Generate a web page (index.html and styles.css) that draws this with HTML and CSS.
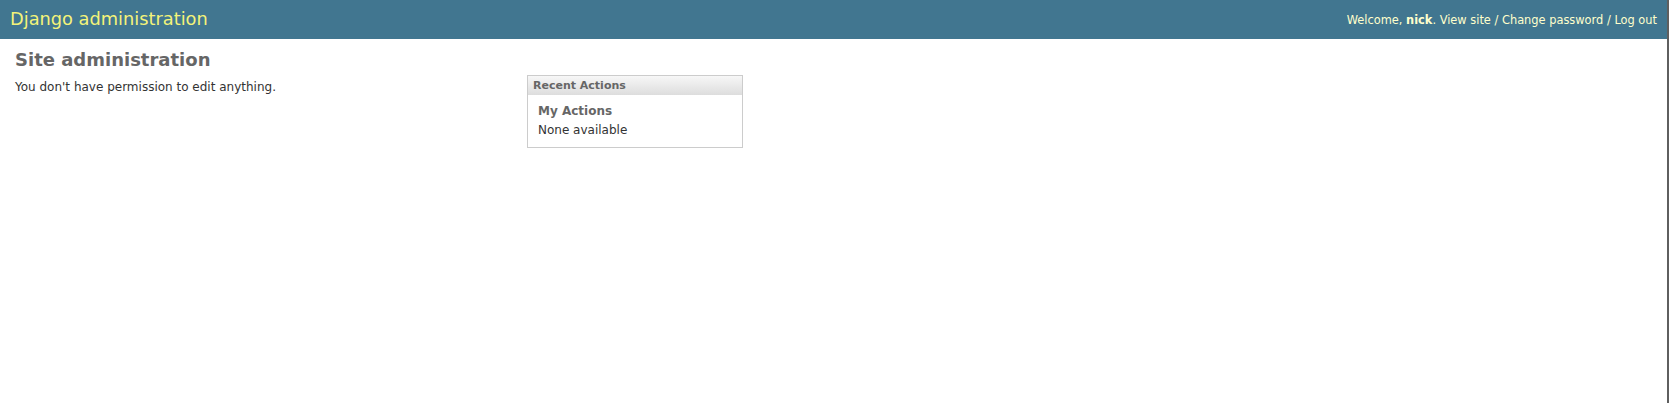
FILE: index.html
```html
<!DOCTYPE html>
<html lang="en">
<head>
<meta charset="utf-8">
<title>Site administration | Django site admin</title>
<link rel="stylesheet" href="styles.css">
</head>
<body>
<div class="page">
  <div class="header">
    <h1 class="branding">Django administration</h1>
    <div class="user-tools">Welcome, <strong>nick</strong>. <a href="#">View site</a> / <a href="#">Change password</a> / <a href="#">Log out</a></div>
  </div>
  <div class="content">
    <h1 class="title">Site administration</h1>
    <div class="colms">
      <div class="content-main">
        <p>You don't have permission to edit anything.</p>
      </div>
      <div class="content-related">
        <div class="module">
          <h2>Recent Actions</h2>
          <h3>My Actions</h3>
          <p>None available</p>
        </div>
      </div>
    </div>
  </div>
</div>
</body>
</html>
```
FILE: styles.css
```css
html, body {
  margin: 0;
  padding: 0;
  height: 100%;
}
body {
  font-family: "DejaVu Sans", "Bitstream Vera Sans", Verdana, sans-serif;
  font-size: 12px;
  color: #333;
  background: #fff;
  border-right: 2px solid #5f5f5f;
  box-sizing: border-box;
}
.page {
  min-height: 100%;
}
.header {
  display: flex;
  justify-content: space-between;
  align-items: flex-start;
  height: 39px;
  background: #417690;
  color: #ffc;
}
.branding {
  margin: 8px 10px;
  font-size: 17.8px;
  font-weight: normal;
  color: #f4f379;
  line-height: normal;
}
.user-tools {
  padding: 13px 10px 0;
  font-size: 11.4px;
  color: #ffc;
  text-align: right;
}
.user-tools a {
  color: #ffc;
  text-decoration: none;
}
.user-tools strong {
  font-weight: bold;
}
.content {
  margin: 10px 15px;
}
.title {
  font-size: 18px;
  color: #666;
  margin: 0 0 5px 0;
  line-height: normal;
}
.colms {
  display: flex;
  align-items: flex-start;
}
.content-main {
  width: 512px;
  flex: none;
}
.content-main p {
  margin: 5px 0 0;
}
.content-related {
  width: 216px;
  flex: none;
}
.module {
  border: 1px solid #ccc;
  background: #fff;
}
.module h2 {
  margin: 0;
  padding: 3px 5px 3px;
  font-size: 11px;
  font-weight: bold;
  color: #666;
  background: linear-gradient(#f7f7f7, #dddddd);
  line-height: 13px;
}
.module h3 {
  margin: 9px 0 5px;
  padding-left: 10px;
  font-size: 12px;
  font-weight: bold;
  color: #666;
}
.module p {
  margin: 0 0 10px 10px;
}
```
